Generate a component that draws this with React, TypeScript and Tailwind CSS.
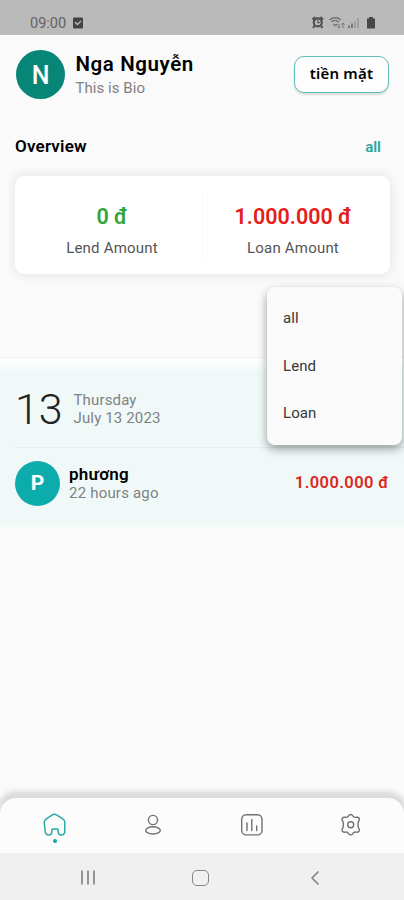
import React from 'react'
import { ChevronLeft } from 'lucide-react'

const menuItems = ['all', 'Lend', 'Loan']

export default function App() {
    return (
        <div className="relative flex h-[900px] w-[404px] flex-col overflow-hidden bg-[#fafafa] font-[Roboto,'Noto_Sans',sans-serif] text-black">
            <StatusBar />

            {/* Profile */}
            <header className="flex h-[77px] items-center pl-4 pr-[15px]">
                <div className="flex size-[49px] items-center justify-center rounded-full bg-[#078678] pt-[3px] text-[25px] font-medium text-white">
                    N
                </div>
                <div className="ml-[10.5px] flex-1 pt-[2px]">
                    <h1 className="text-[20.5px] font-semibold leading-6 tracking-[0.6px]">Nga Nguyễn</h1>
                    <p className="mt-px text-[15px] leading-[22px] tracking-[0.05px] text-[#808080]">This is Bio</p>
                </div>
                <button className="h-[37px] w-[95px] rounded-[10px] border-[1.5px] border-[#62bcb9] bg-[#fdfdfd] pb-[2px] font-['Noto_Sans',sans-serif] text-[15px] font-semibold tracking-[0.2px] shadow-[0_2px_2px_rgba(0,0,0,0.13)]">
                    tiền mặt
                </button>
            </header>

            {/* Overview */}
            <div className="mt-[23px] flex h-[22px] items-center justify-between pl-[15px] pr-[23px]">
                <h2 className="text-[17px] font-semibold tracking-[0.2px]">Overview</h2>
                <span className="text-[15px] font-semibold text-[#25a6a3]">all</span>
            </div>
            <section className="mx-[15px] mt-[18px] flex h-[98px] w-[375px] shrink-0 items-center rounded-[9px] bg-white px-[7px] shadow-[0_0_10px_2px_rgba(0,0,0,0.08)]">
                <Amount value="0 đ" label="Lend Amount" color="text-[#34a53a]" />
                <div className="h-[72px] w-px bg-[#fafafa]" />
                <Amount value="1.000.000 đ" label="Loan Amount" color="text-[#e32118]" />
            </section>

            {/* Transactions */}
            <section className="mt-[83px] border-t border-[#f0f0f0]">
                <div className="h-[13px] bg-gradient-to-b from-white to-[#f1faf9]" />
                <div className="h-[156px] bg-[#f0f9f8]">
                    <div className="ml-[15px] flex h-[77px] items-center border-b border-[#e7efef]">
                        <span className="w-[58.5px] text-[43px] font-light leading-none text-[#222]">13</span>
                        <div className="text-[15px] leading-[18px] tracking-[0.15px] text-[#7e8282]">
                            <p>Thursday</p>
                            <p>July 13 2023</p>
                        </div>
                    </div>
                    <div className="flex h-[70px] items-center px-[15px]">
                        <div className="flex size-[45px] items-center justify-center rounded-full bg-[#0bacab] pt-px text-[21px] font-bold text-white">
                            P
                        </div>
                        <div className="ml-[9px] flex-1 pt-px">
                            <p className="text-[17px] font-semibold leading-[19px] tracking-[0.25px]">phương</p>
                            <p className="text-[15px] leading-[19px] tracking-[0.2px] text-[#7e8282]">22 hours ago</p>
                        </div>
                        <span className="pt-px text-[16.5px] font-semibold tracking-[0.4px] text-[#da2820]">1.000.000 đ</span>
                    </div>
                </div>
            </section>

            <BottomNav />
            <SystemNav />

            {/* Filter menu */}
            <div className="absolute left-[267px] top-[287px] flex h-[158px] w-[135px] flex-col rounded-[8px] bg-[#fafafa] py-2 pl-4 shadow-[0_4px_10px_rgba(0,0,0,0.38)]">
                {menuItems.map((item) => (
                    <button key={item} className="flex h-[47.3px] items-center text-left text-[15px] tracking-[0.1px] text-[#383838]">
                        {item}
                    </button>
                ))}
            </div>
        </div>
    )
}

function Amount({ value, label, color }: { value: string; label: string; color: string }) {
    return (
        <div className="flex-1 pt-[11px] text-center">
            <p className={`text-[21.5px] font-semibold leading-[26px] ${color}`}>{value}</p>
            <p className="mt-[8px] text-[15px] leading-5 tracking-[0.2px] text-[#555]">{label}</p>
        </div>
    )
}

function StatusBar() {
    return (
        <div className="flex h-[36px] shrink-0 items-start border-b border-white bg-[#bababa] pl-[30px] pr-[28px] pt-[15px] text-[#505050]">
            <span className="text-[14.5px] leading-[18px] text-[#626262]">09:00</span>
            <svg className="ml-[6px] mt-[2px]" width="12" height="12" viewBox="0 0 12 12" fill="none">
                <rect x="1" y="0.5" width="10" height="11" rx="1" fill="#444" />
                <path d="M3 5l2.3 2.5L9 4" stroke="#bababa" strokeWidth="1.3" />
            </svg>
            <div className="flex-1" />
            <svg className="mr-px mt-px" width="64" height="13" viewBox="0 0 64 13" fill="none" stroke="currentColor">
                {/* alarm */}
                <path d="M1.500 3.5L4 1M9.500 1l2.5 2.5M3.500 10l-1.500 1.8M10 10l1.500 1.8" strokeWidth="2" />
                <circle cx="6.8" cy="6.4" r="4" strokeWidth="2.2" />
                <path d="M6.8 4v2.6h2" strokeWidth="1.1" />
                {/* wifi */}
                <path d="M18.500 4c3.2-3 8.2-3 11.4 0M20.500 6c2-2 5.2-2 7.3 0M22.500 8l1.7 1.5L26.500 8" strokeWidth="1.4" stroke="#707070" />
                <path d="M28 8v4M26.500 10.5L28 12l1.5-1.5M32 12V7M30.500 8.5L32 7l1.5 1.5" strokeWidth="1" stroke="#777" />
                {/* signal */}
                <path d="M38 12V9.5M41 12V7.5" strokeWidth="2" stroke="#777" />
                <path d="M44 12V5M47 12V2" strokeWidth="2" stroke="#a0a0a0" />
                {/* battery */}
                <path d="M56 2.5h2V1h4v1.5h2v10h-8z" fill="#464646" stroke="none" />
            </svg>
        </div>
    )
}

function BottomNav() {
    return (
        <nav className="mt-auto grid h-[55px] shrink-0 grid-cols-4 rounded-t-[16px] bg-[#fcfcfc] px-[5px] pt-[14px] shadow-[0_-5px_5px_2px_rgba(0,0,0,0.12)]">
            <div className="flex flex-col items-center gap-[1px]">
                <svg width="26" height="26" viewBox="0 0 26 26" fill="none" stroke="#2aa9a6" strokeWidth="1.5" strokeLinejoin="round">
                    <path d="M3.200 10.500c0-1.500.5-2.500 1.700-3.300l6.500-4.300c1.400-.9 2.800-.9 4.200 0l6.500 4.300c1.200.8 1.700 1.800 1.700 3.300V19c0 2.700-1.300 4-3.600 4-2 0-3-.9-3-2.700V18c0-.6-.3-.9-.9-.9h-4.600c-.6 0-.9.3-.9.9v2.300c0 1.800-1 2.700-3 2.700-2.300 0-3.600-1.300-3.600-4z" />
                </svg>
                <span className="ml-px size-1 rounded-full bg-[#16a6a3]" />
            </div>
            <NavIcon>
                <circle cx="13" cy="8" r="4.600" />
                <ellipse cx="13" cy="18.400" rx="7.300" ry="3.600" />
            </NavIcon>
            <NavIcon>
                <rect x="3.700" y="2.700" width="20.300" height="20.200" rx="4.500" />
                <path d="M9 11v7.500M13.800 7.500v11M18.700 14v4.500" />
            </NavIcon>
            <NavIcon>
                <g transform="translate(.7 -.3)">
                    <path d="M10.900 4.100C11.600 3 12.200 2.800 13 2.800s1.400.2 2.100 1.300c.9 1.400 1.900 1.800 3.500 1.500 1.500-.3 2.300.1 2.800.9.500.9.600 1.700-.4 3-.9 1.300-.9 5.700 0 7 1 1.300.9 2.100.4 3-.5.800-1.300 1.200-2.800.9-1.600-.3-2.600.1-3.500 1.500-.7 1.100-1.300 1.300-2.100 1.300s-1.400-.2-2.100-1.300c-.9-1.400-1.900-1.800-3.500-1.500-1.500.3-2.300-.1-2.800-.9-.5-.9-.6-1.700.4-3 .9-1.300.9-5.700 0-7-1-1.300-.9-2.100-.4-3 .5-.8 1.300-1.200 2.800-.9 1.600.3 2.600-.1 3.500-1.500z" />
                    <circle cx="13" cy="13" r="3" />
                </g>
            </NavIcon>
        </nav>
    )
}

function NavIcon({ children }: { children: React.ReactNode }) {
    return (
        <div className="flex justify-center">
            <svg width="26" height="26" viewBox="0 0 26 26" fill="none" stroke="#707070" strokeWidth="1.4" strokeLinecap="round" strokeLinejoin="round">
                {children}
            </svg>
        </div>
    )
}

function SystemNav() {
    return (
        <div className="flex h-[47px] shrink-0 items-center justify-between bg-[#f0f0f0] pl-[79px] pr-[77px] pt-[3px] text-[#858585]">
            <svg width="18" height="18" viewBox="0 0 18 18" stroke="currentColor" strokeWidth="1.700">
                <path d="M3 1.500v14M9 1.500v14M15 1.500v14" />
            </svg>
            <div className="h-4 w-[17px] rounded-[5px] border-[1.5px] border-[#858585]" />
            <ChevronLeft className="h-[24px] w-[24px]" strokeWidth={1.700} />
        </div>
    )
}
